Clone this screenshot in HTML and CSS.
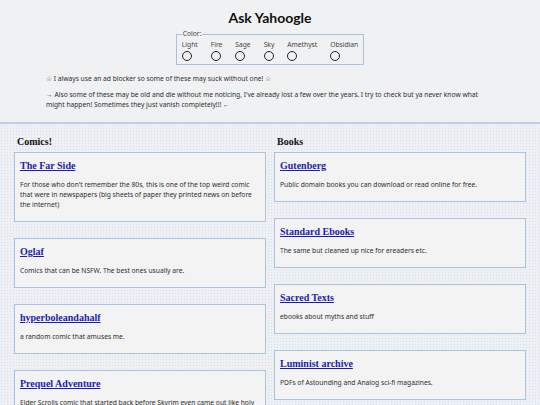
FILE: index.html
```html
<!DOCTYPE html>
<html>
<head>
<meta charset="utf-8">
<title>Ask Yahoogle</title>
<link rel="stylesheet" href="styles.css">
</head>
<body>
<header class="top">
  <h1 class="site-title">Ask Yahoogle</h1>
  <fieldset class="colors">
    <legend>Color:</legend>
    <label class="opt"><span>Light</span><input type="radio" name="c"></label>
    <label class="opt"><span>Fire</span><input type="radio" name="c"></label>
    <label class="opt"><span>Sage</span><input type="radio" name="c"></label>
    <label class="opt"><span>Sky</span><input type="radio" name="c"></label>
    <label class="opt"><span>Amethyst</span><input type="radio" name="c"></label>
    <label class="opt"><span>Obsidian</span><input type="radio" name="c"></label>
  </fieldset>
  <div class="notes">
    <p>☆ I always use an ad blocker so some of these may suck without one! ☆</p>
    <p>→ Also some of these may be old and die without me noticing, I've already lost a few over the years. I try to check but ya never know what might happen! Sometimes they just vanish completely!!! ←</p>
  </div>
</header>
<main class="main">
  <section class="col">
    <h2 class="col-title">Comics!</h2>
    <div class="card"><h3><a href="#">The Far Side</a></h3><p>For those who don't remember the 80s, this is one of the top weird comic that were in newspapers (big sheets of paper they printed news on before the internet)</p></div>
    <div class="card"><h3><a href="#">Oglaf</a></h3><p>Comics that can be NSFW. The best ones usually are.</p></div>
    <div class="card"><h3><a href="#">hyperboleandahalf</a></h3><p>a random comic that amuses me.</p></div>
    <div class="card"><h3><a href="#">Prequel Adventure</a></h3><p>Elder Scrolls comic that started back before Skyrim even came out like holy crap, and it's still going.</p></div>
  </section>
  <section class="col">
    <h2 class="col-title">Books</h2>
    <div class="card"><h3><a href="#">Gutenberg</a></h3><p>Public domain books you can download or read online for free.</p></div>
    <div class="card"><h3><a href="#">Standard Ebooks</a></h3><p>The same but cleaned up nice for ereaders etc.</p></div>
    <div class="card"><h3><a href="#">Sacred Texts</a></h3><p>ebooks about myths and stuff</p></div>
    <div class="card"><h3><a href="#">Luminist archive</a></h3><p>PDFs of Astounding and Analog sci-fi magazines.</p></div>
  </section>
</main>
</body>
</html>
```

FILE: styles.css
```css
html, body {
  margin: 0;
  padding: 0;
}
body {
  font-family: "Noto Sans", "Open Sans", sans-serif;
  font-size: 6.7px;
  color: #2e2e2e;
  background: #f0f1f3;
  overflow: hidden;
  height: 405px;
}
.top {
  background: #f0f1f3;
  padding: 9px 46px 12px;
  border-bottom: 2px solid #bccfe6;
  display: flex;
  flex-direction: column;
  align-items: center;
}
.site-title {
  font-family: "Lato", "DejaVu Sans", sans-serif;
  font-weight: 700;
  font-size: 14px;
  line-height: 18px;
  color: #111;
  margin: 0 0 3px;
}
.colors {
  margin: 0;
  padding: 2px 5px 3px;
  border: 1px solid #a9c2df;
  display: flex;
  gap: 13px;
}
.colors legend {
  padding: 0 1px;
  font-size: 6.7px;
  line-height: 8px;
  color: #444;
}
.opt {
  display: flex;
  flex-direction: column;
  align-items: flex-start;
  gap: 1px;
  line-height: 10px;
  color: #444;
}
.opt input {
  appearance: none;
  -webkit-appearance: none;
  margin: 0;
  width: 10px;
  height: 10px;
  border: 1.3px solid #222;
  border-radius: 50%;
  background: transparent;
  box-sizing: border-box;
}
.notes {
  align-self: stretch;
  margin-top: 3px;
}
.notes p {
  margin: 6px 0 0;
  line-height: 10px;
}
.main {
  display: grid;
  grid-template-columns: 1fr 1fr;
  gap: 8px;
  padding: 12px 14px 0;
  min-height: 300px;
  background-color: #eef0f4;
  background-image: radial-gradient(circle, #d3deef 0.8px, transparent 1px);
  background-size: 3px 3px;
}
.col {
  display: flex;
  flex-direction: column;
  gap: 16px;
}
.col-title {
  font-family: "Liberation Serif", serif;
  font-size: 10px;
  line-height: 12px;
  font-weight: 700;
  color: #111;
  margin: 0 0 -12px 3px;
}
.card {
  background: #f3f3f4;
  border: 1px solid #a8c3e0;
  padding: 7px 5px 11px;
}
.card h3 {
  margin: 0;
  font-family: "Liberation Serif", serif;
  font-size: 10px;
  line-height: 12px;
  font-weight: 700;
}
.card h3 a {
  color: #1c1cac;
}
.card p {
  margin: 8px 0 0;
  line-height: 10px;
}
```
